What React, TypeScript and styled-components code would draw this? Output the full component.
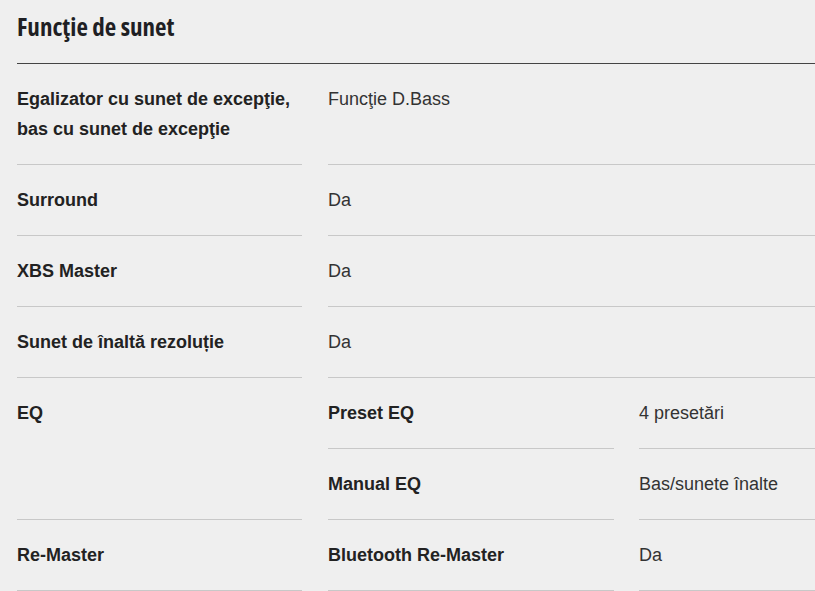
import React from "react";
import styled, { createGlobalStyle } from "styled-components";

const Global = createGlobalStyle`
  html, body { margin: 0; padding: 0; background: #efefef; overflow: hidden; }
  body { font-family: "Liberation Sans", Arial, sans-serif; }
`;

const Section = styled.section`
  padding-left: 17px;
  overflow: hidden;
`;

const Inner = styled.div`
  width: 908px;
`;

const Title = styled.h2`
  margin: 0;
  padding: 10px 0 21px;
  font-family: "Open Sans", "Noto Sans", sans-serif;
  font-stretch: condensed;
  font-weight: 700;
  font-size: 25px;
  line-height: 32px;
  color: #1f1f24;
  letter-spacing: 0;
  border-bottom: 1px solid #444;
`;

const Row = styled.div`
  display: grid;
  grid-template-columns: 285px 1fr;
  column-gap: 26px;
`;

const Cell = styled.div<{ $bold?: boolean }>`
  padding: 20px 0;
  font-size: 18px;
  line-height: 30px;
  font-weight: ${(p) => (p.$bold ? 700 : 400)};
  color: ${(p) => (p.$bold ? "#222" : "#333")};
  border-bottom: 1px solid #c8c8c8;
`;

const SubList = styled.div`
  display: flex;
  flex-direction: column;
`;

const SubRow = styled.div`
  display: grid;
  grid-template-columns: 286px 1fr;
  column-gap: 25px;
`;

type Sub = { label: string; value: string };
type Item = { label: string[]; value?: string; subs?: Sub[] };

const data: Item[] = [
  { label: ["Egalizator cu sunet de excepţie,", "bas cu sunet de excepţie"], value: "Funcţie D.Bass" },
  { label: ["Surround"], value: "Da" },
  { label: ["XBS Master"], value: "Da" },
  { label: ["Sunet de înaltă rezoluție"], value: "Da" },
  {
    label: ["EQ"],
    subs: [
      { label: "Preset EQ", value: "4 presetări" },
      { label: "Manual EQ", value: "Bas/sunete înalte" },
    ],
  },
  { label: ["Re-Master"], subs: [{ label: "Bluetooth Re-Master", value: "Da" }] },
];

export default function App() {
  return (
    <>
      <Global />
      <Section>
        <Inner>
          <Title>Funcţie de sunet</Title>
          {data.map((item, i) => (
            <Row key={i}>
              <Cell $bold>
                {item.label.map((l, j) => (
                  <div key={j}>{l}</div>
                ))}
              </Cell>
              {item.subs ? (
                <SubList>
                  {item.subs.map((s, k) => (
                    <SubRow key={k}>
                      <Cell $bold>{s.label}</Cell>
                      <Cell>{s.value}</Cell>
                    </SubRow>
                  ))}
                </SubList>
              ) : (
                <Cell>{item.value}</Cell>
              )}
            </Row>
          ))}
        </Inner>
      </Section>
    </>
  );
}
